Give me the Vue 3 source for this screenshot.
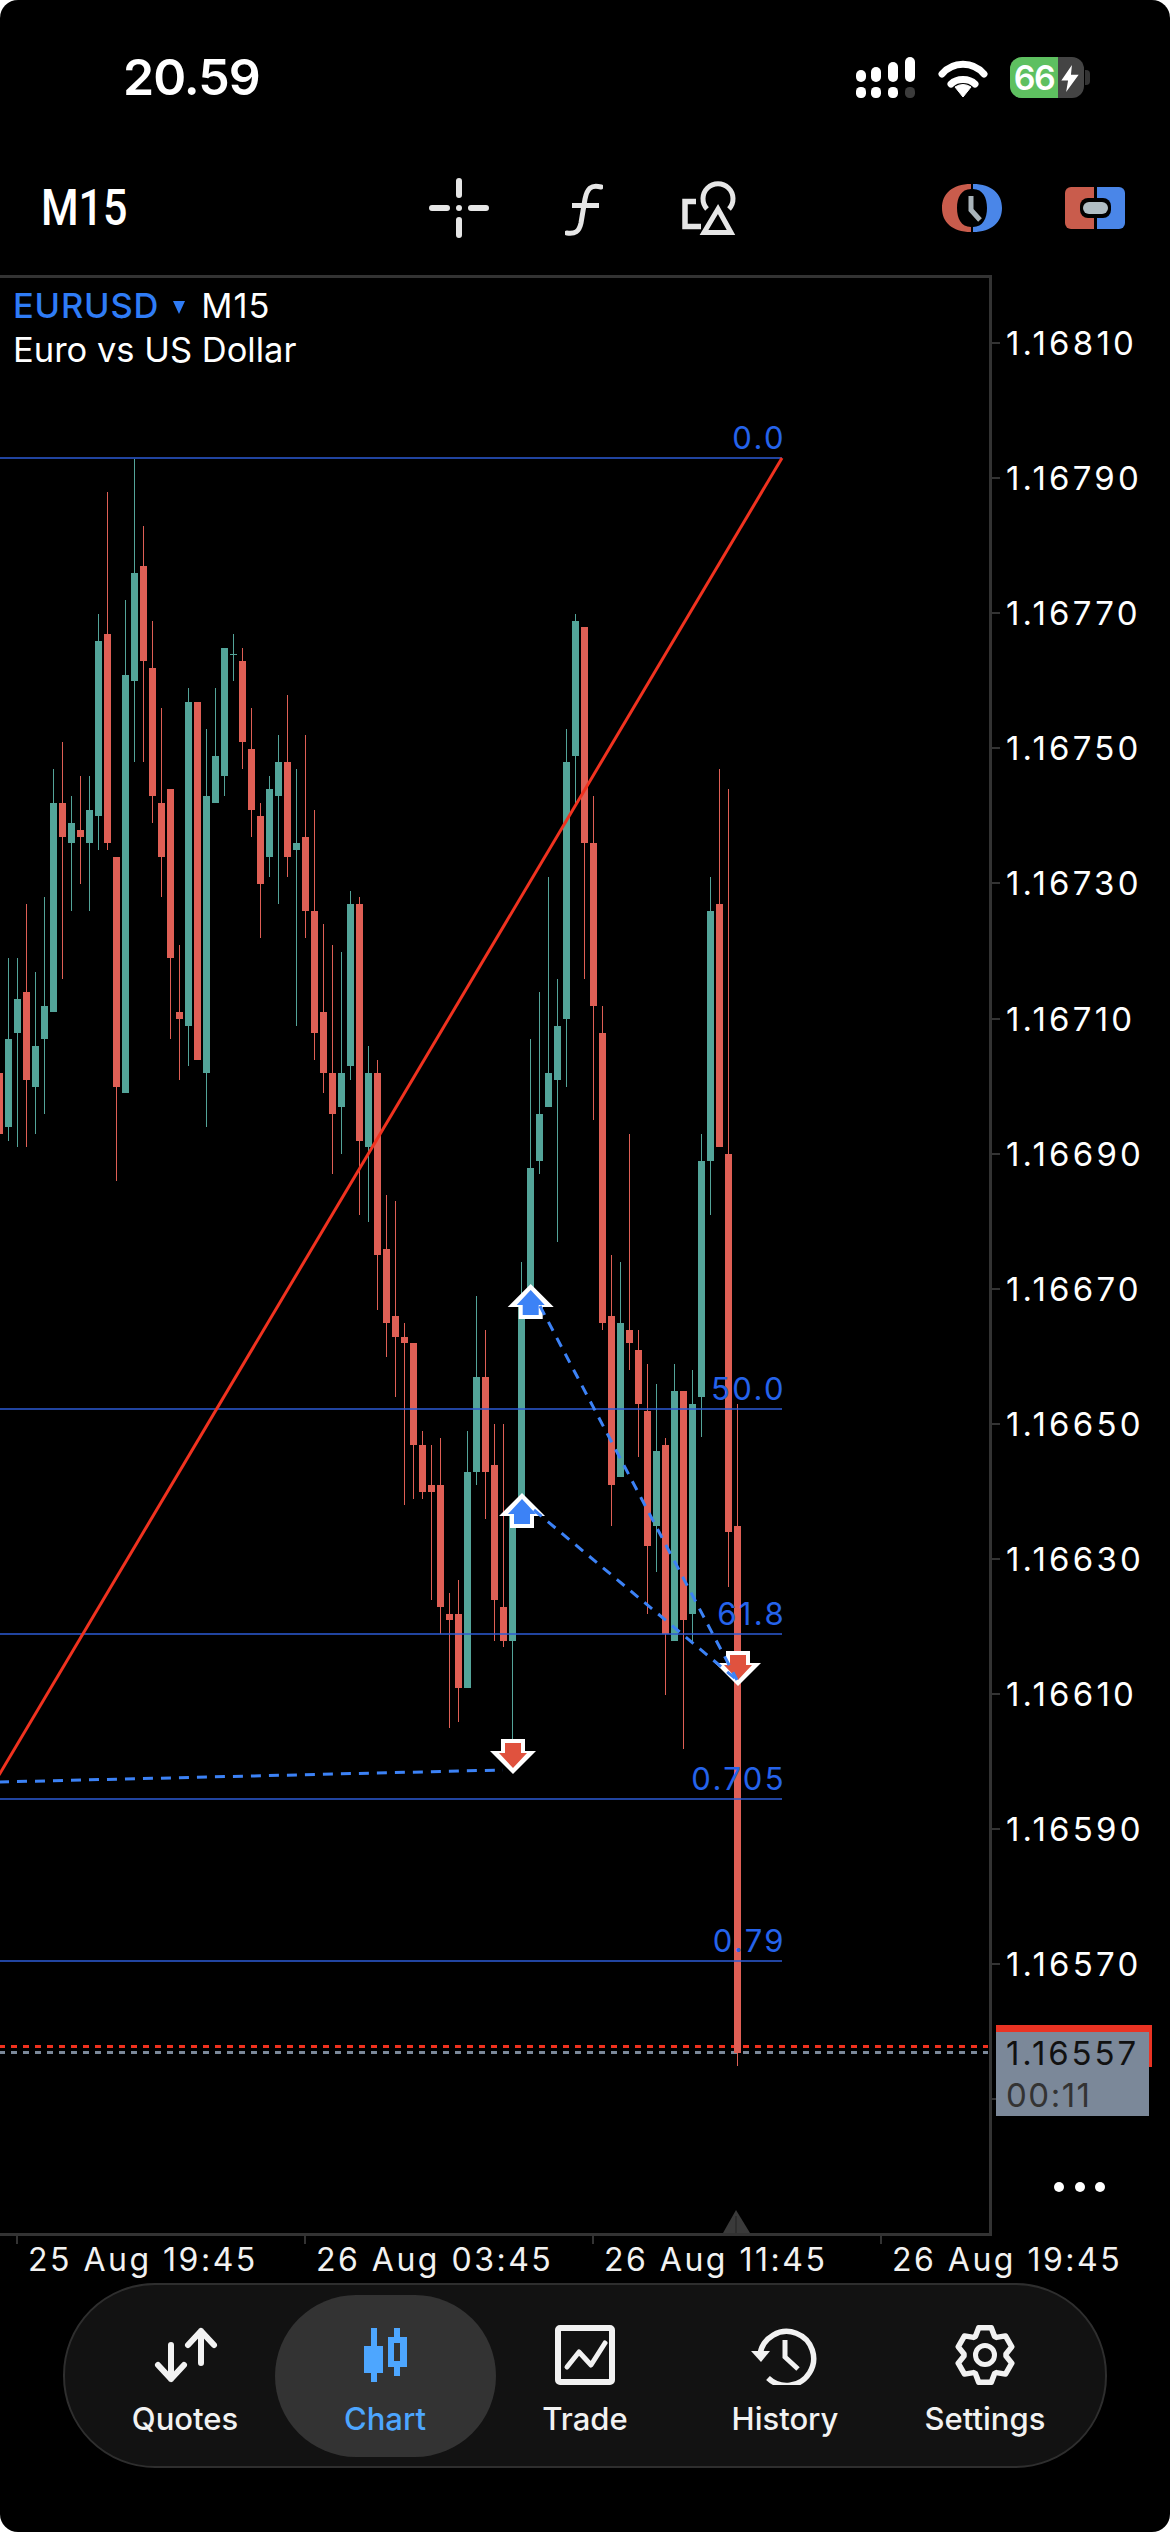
<script setup>
const raw = [
  ['r',1060,1073,1134,1145],['g',958,1039,1127,1141],['g',958,999,1033,1147],['r',904,992,1080,1147],
  ['g',972,1046,1087,1134],['g',897,1006,1039,1114],['g',769,803,1012,1012],['r',742,803,837,979],
  ['g',796,823,843,911],['r',776,830,837,884],['g',776,810,843,911],['g',614,641,816,850],
  ['r',492,634,843,850],['r',857,857,1087,1181],['g',600,675,1093,1093],['g',459,573,681,762],
  ['r',526,566,661,762],['r',621,668,796,823],['r',708,803,857,897],['r',789,789,958,1039],
  ['r',945,1012,1019,1080],['g',688,702,1026,1066],['r',702,702,1060,1060],['g',729,796,1073,1127],
  ['g',688,756,803,803],['g',648,648,776,796],['g',634,654,655,681],['r',648,661,742,769],
  ['r',708,749,810,837],['r',803,816,884,938],['g',776,789,857,877],['g',735,762,796,904],
  ['r',695,762,857,877],['g',769,843,850,1026],['r',735,837,911,938],['r',810,911,1033,1060],
  ['r',924,1012,1073,1093],['r',945,1073,1114,1174],['g',952,1073,1107,1154],['g',891,904,1066,1080],
  ['r',897,904,1141,1215],['g',1046,1073,1147,1222],['r',1060,1073,1255,1310],['r',1195,1249,1323,1357],
  ['r',1201,1316,1337,1397],['r',1323,1337,1343,1505],['r',1343,1343,1445,1499],['r',1431,1445,1492,1499],
  ['r',1445,1485,1492,1600],['r',1438,1485,1607,1634],['r',1593,1614,1620,1728],['r',1580,1614,1688,1722],
  ['g',1431,1472,1688,1688],['g',1296,1377,1472,1485],['r',1330,1377,1472,1519],['r',1424,1465,1600,1641],
  ['r',1424,1607,1641,1647],['g',1510,1510,1641,1739],['g',1262,1300,1505,1505],['g',1039,1168,1295,1295],
  ['g',992,1114,1161,1174],['g',877,1073,1107,1107],['g',979,1026,1080,1242],['g',729,762,1019,1087],
  ['g',614,621,756,803],['r',627,627,843,979],['r',796,843,1006,1120],['r',1006,1033,1323,1330],
  ['r',1255,1316,1485,1526],['g',1262,1323,1477,1477],['r',1134,1330,1343,1370],['r',1330,1350,1404,1457],
  ['r',1364,1411,1546,1614],['g',1384,1451,1526,1572],['r',1438,1445,1634,1695],['g',1364,1391,1641,1641],
  ['r',1391,1391,1620,1749],['g',1370,1404,1614,1641],['g',1134,1161,1397,1437],['g',877,911,1161,1215],
  ['r',769,904,1147,1147],['r',789,1154,1532,1587],['r',1404,1526,2053,2066]
]
const candles = raw.map((c, i) => ({
  id: i,
  color: c[0] === 'g' ? '#53a499' : '#df5f55',
  x: 9 * i,
  hi: c[1],
  top: c[2],
  h: c[3] - c[2],
  lo: c[4]
}))

const fibs = [
  { label: '0.0', y: 458 },
  { label: '50.0', y: 1409 },
  { label: '61.8', y: 1634 },
  { label: '0.705', y: 1799 },
  { label: '0.79', y: 1961 }
]

const prices = ['1.16810','1.16790','1.16770','1.16750','1.16730','1.16710','1.16690','1.16670','1.16650','1.16630','1.16610','1.16590','1.16570','']
const times = ['25 Aug 19:45','26 Aug 03:45','26 Aug 11:45','26 Aug 19:45']

const signalTop = [{ x: 0, y: 13, h: 12 }, { x: 15, y: 10, h: 15 }, { x: 32, y: 5, h: 20 }, { x: 49, y: 0, h: 25 }]

function gearPath(cx, cy, ro, ri) {
  const pts = []
  for (let k = 0; k < 6; k++) {
    const a = k * 60 - 90
    for (const [d, r] of [[-27, ri], [-13, ro], [13, ro], [27, ri]]) {
      const t = ((a + d) * Math.PI) / 180
      pts.push(`${(cx + r * Math.cos(t)).toFixed(1)} ${(cy + r * Math.sin(t)).toFixed(1)}`)
    }
  }
  return 'M' + pts.join('L') + 'Z'
}
const gear = gearPath(982, 2355, 28, 21)
</script>

<template>
  <div class="page">
    <header class="status">
      <span class="time">20.59</span>
      <div class="status-icons">
        <svg class="signal" viewBox="0 0 60 41" width="60" height="41">
          <rect v-for="s in signalTop" :key="s.x" :x="s.x" :y="s.y" width="10" :height="s.h" rx="5" fill="#fff" />
          <rect x="0" y="30" width="10" height="11" rx="4.5" fill="#fff" />
          <rect x="15" y="30" width="10" height="11" rx="4.5" fill="#fff" />
          <rect x="32" y="30" width="10" height="11" rx="4.5" fill="#fff" />
          <rect x="49" y="30" width="10" height="11" rx="4.5" fill="#3c3c3c" />
        </svg>
        <svg class="wifi" viewBox="937 57 50 41" width="50" height="41">
          <path d="M941 74 C952 61 972 61 983 74" fill="none" stroke="#fff" stroke-width="7" stroke-linecap="round" />
          <path d="M950 84 C956 78 968 78 974 84" fill="none" stroke="#fff" stroke-width="7" stroke-linecap="round" />
          <path d="M962 97 L954 87 Q962 82 970 87 Z" fill="#fff" stroke="#fff" stroke-linejoin="round" />
        </svg>
        <div class="battery-wrap">
          <div class="battery">
            <div class="battery-fill">66</div>
            <svg class="bolt" viewBox="0 0 20 28" width="20" height="27">
              <path d="M12 0 L1 16 H8 L6 28 L19 10 H11 Z" fill="#fff" />
            </svg>
          </div>
          <div class="nub"></div>
        </div>
      </div>
    </header>

    <div class="toolbar">
      <div class="tf"><span class="tf-text">M15</span></div>
      <svg class="tool" viewBox="429 177 60 60" width="60" height="60">
        <g stroke="#e6e6e6" stroke-width="6" stroke-linecap="round" fill="none">
          <path d="M432 207 H447 M471 207 H486 M459 180 V194 M459 219 V234" />
        </g>
        <circle cx="459" cy="207" r="3" fill="#e6e6e6" />
      </svg>
      <svg class="tool tool-f" viewBox="565 177 38 60" width="38" height="60">
        <path d="M601 186 C591 183 587 188 585 198 L581 222 C579 231 575 233 567 232" fill="none" stroke="#e6e6e6" stroke-width="5" stroke-linecap="round" />
        <path d="M572 204.5 H599" stroke="#e6e6e6" stroke-width="5" />
      </svg>
      <svg class="tool tool-s" viewBox="682 177 54 60" width="54" height="60">
        <path d="M707 208 A15 15 0 1 1 729 208" fill="none" stroke="#e6e6e6" stroke-width="5" />
        <path d="M718 208 L731 231.5 H704 Z" fill="none" stroke="#e6e6e6" stroke-width="5" />
        <path d="M696 200.5 H685 V225.5 H701" fill="none" stroke="#e6e6e6" stroke-width="5.5" />
      </svg>
      <svg class="tool tool-c" viewBox="942 177 60 60" width="60" height="60">
        <path d="M971 183 C952 183 942 193 942 207 C942 221 952 231 971 231 V226 C961 226 957 217 957 207 C957 197 961 188 971 188 Z" fill="#c95c4c" />
        <path d="M973 183 C992 183 1002 193 1002 207 C1002 221 992 231 973 231 V226 C983 226 987 217 987 207 C987 197 983 188 973 188 Z" fill="#4a86e8" />
        <path d="M971 195 V209 L980 219" fill="none" stroke="#a9b4ba" stroke-width="5" />
      </svg>
      <svg class="tool tool-t" viewBox="1065 177 60 60" width="60" height="60">
        <path d="M1094 186 H1071 A6 6 0 0 0 1065 192 V222 A6 6 0 0 0 1071 228 H1094 Z" fill="#c95c4c" />
        <path d="M1097 186 H1119 A6 6 0 0 1 1125 192 V222 A6 6 0 0 1 1119 228 H1097 Z" fill="#4a86e8" />
        <rect x="1080" y="197" width="31" height="20" rx="8" fill="#000" />
        <rect x="1083" y="201" width="25" height="12" rx="6" fill="#b0bdc3" />
      </svg>
    </div>

    <section class="chart-row">
      <div class="chart">
        <svg class="plot" viewBox="1 278 988 1955" width="988" height="1955">
          <g stroke-width="3" stroke-dasharray="6 6">
            <path d="M0 2046.5 H989" stroke="#f0321f" />
            <path d="M0 2052.5 H989" stroke="#7b8899" />
          </g>
          <g v-for="c in candles" :key="c.id" :fill="c.color">
            <rect :x="c.x" :y="c.hi" width="1" :height="c.lo - c.hi" />
            <rect :x="c.x - 3" :y="c.top" width="7" :height="c.h" />
          </g>
          <line v-for="f in fibs" :key="f.label" x1="0" x2="783" :y1="f.y" :y2="f.y" stroke="#2c5bd6" stroke-width="1.3" />
          <line x1="0" y1="1775" x2="783" y2="458" stroke="#f0321f" stroke-width="3" />

          <g transform="translate(531.7 1284)">
            <polygon points="0,0 23,23 12,23 12,35 -12,35 -12,23 -23,23" fill="#fff" />
            <polygon points="0,6 14,21 8,21 8,31 -8,31 -8,21 -14,21" fill="#3c82f6" />
          </g>
          <g transform="translate(523 1493)">
            <polygon points="0,0 23,23 12,23 12,35 -12,35 -12,23 -23,23" fill="#fff" />
            <polygon points="0,6 14,21 8,21 8,31 -8,31 -8,21 -14,21" fill="#3c82f6" />
          </g>
          <g transform="translate(514 1774)">
            <polygon points="0,0 23,-23 12,-23 12,-35 -12,-35 -12,-23 -23,-23" fill="#fff" />
            <polygon points="0,-6 14,-21 8,-21 8,-31 -8,-31 -8,-21 -14,-21" fill="#e0523e" />
          </g>
          <g transform="translate(739 1686)">
            <polygon points="0,0 23,-23 12,-23 12,-35 -12,-35 -12,-23 -23,-23" fill="#fff" />
            <polygon points="0,-6 14,-21 8,-21 8,-31 -8,-31 -8,-21 -14,-21" fill="#e0523e" />
          </g>

          <g fill="none" stroke="#3c82f6" stroke-width="3" stroke-dasharray="10 8">
            <path d="M541 1306 L738 1680" />
            <path d="M535 1510 L738 1680" />
            <path d="M0 1782 L504 1770" />
          </g>

          <text v-for="f in fibs" :key="'t' + f.label" class="fib-label" x="787" :y="f.y - 9" text-anchor="end">{{ f.label }}</text>

          <path d="M737 2210 L751 2233 H724 Z" fill="#3a3a3a" />
          <path d="M737 2216 V2233" stroke="#222" stroke-width="1" />
        </svg>
        <div class="symbol">
          <div class="symbol-line">
            <span class="sym">EURUSD</span>
            <span class="sym-tri"></span>
            <span class="sym-tf">M15</span>
          </div>
          <div class="symbol-name">Euro vs US Dollar</div>
        </div>
      </div>

      <div class="price-axis">
        <div v-for="(p, i) in prices" :key="i" class="price-row">
          <span class="tick"></span>
          <span class="price">{{ p }}</span>
        </div>
        <div class="price-box">
          <div class="box-price">1.16557</div>
          <div class="box-time">00:11</div>
        </div>
        <div class="dots"><i></i><i></i><i></i></div>
      </div>
    </section>

    <div class="time-axis">
      <div v-for="t in times" :key="t" class="time-cell">
        <span class="time-tick"></span>
        <span class="time-label">{{ t }}</span>
      </div>
    </div>

    <nav class="tabs">
      <div class="tab">
        <svg viewBox="150 2325 70 60" width="70" height="60">
          <g fill="none" stroke="#f2f2f2" stroke-width="6" stroke-linecap="round" stroke-linejoin="round">
            <path d="M201 2363 V2331 M188 2345 L201 2331 L214 2345" />
            <path d="M171 2345 V2379 M158 2365 L171 2379 L184 2365" />
          </g>
        </svg>
        <span class="tab-label">Quotes</span>
      </div>
      <div class="tab active">
        <svg viewBox="350 2325 70 60" width="70" height="60">
          <g fill="#4da6ff">
            <rect x="371" y="2328" width="6" height="54" />
            <rect x="364" y="2346" width="19" height="27" />
            <path fill-rule="evenodd" d="M394 2328 H400 V2337 H407 V2367 H400 V2376 H394 V2367 H388 V2337 H394 Z M394 2343 V2361 H400 V2343 Z" />
          </g>
        </svg>
        <span class="tab-label">Chart</span>
      </div>
      <div class="tab">
        <svg viewBox="550 2325 70 60" width="70" height="60">
          <rect x="558" y="2328" width="54" height="54" rx="2" fill="none" stroke="#f2f2f2" stroke-width="6" />
          <path d="M567 2367 L579 2352 L591 2365 L605 2343" fill="none" stroke="#f2f2f2" stroke-width="5" stroke-linecap="round" stroke-linejoin="round" />
        </svg>
        <span class="tab-label">Trade</span>
      </div>
      <div class="tab">
        <svg viewBox="749 2325 70 60" width="70" height="60">
          <path d="M759 2354 A27 27 0 1 1 767 2378" fill="none" stroke="#f2f2f2" stroke-width="5.5" />
          <path d="M750 2351 H769 L760 2362 Z" fill="#f2f2f2" />
          <path d="M784 2340 V2357 L797 2369" fill="none" stroke="#f2f2f2" stroke-width="5" />
        </svg>
        <span class="tab-label">History</span>
      </div>
      <div class="tab">
        <svg viewBox="947 2325 70 60" width="70" height="60">
          <path :d="gear" fill="none" stroke="#f2f2f2" stroke-width="5.5" stroke-linejoin="round" />
          <circle cx="982" cy="2355" r="9.5" fill="none" stroke="#f2f2f2" stroke-width="5" />
        </svg>
        <span class="tab-label">Settings</span>
      </div>
    </nav>
  </div>
</template>

<style>
html, body { margin: 0; background: #fff; }
</style>

<style scoped>
.page {
  position: relative;
  width: 1170px;
  height: 2532px;
  background: #000;
  border-radius: 18px;
  overflow: hidden;
  color: #fff;
  font-family: Inter, "Noto Sans", sans-serif;
}
.status {
  box-sizing: border-box;
  height: 140px;
  padding: 57px 80px 0 123px;
  display: flex;
  justify-content: space-between;
  align-items: flex-start;
}
.time {
  font-size: 50px;
  line-height: 41px;
  font-weight: 600;
  letter-spacing: -1px;
}
.status-icons { display: flex; align-items: flex-start; gap: 22px; }
.signal, .wifi { display: block; }
.battery-wrap { display: flex; align-items: center; height: 41px; }
.battery {
  width: 74px;
  height: 41px;
  border-radius: 12px;
  background: #444;
  overflow: hidden;
  position: relative;
  display: flex;
}
.battery-fill {
  width: 48px;
  background: #5ec060;
  font-size: 34px;
  font-weight: 600;
  line-height: 41px;
  text-align: center;
  letter-spacing: -1.5px;
}
.bolt { position: absolute; left: 50px; top: 8px; }
.nub { width: 5px; height: 15px; margin-left: 1px; background: #333; border-radius: 0 4px 4px 0; }

.toolbar { height: 135px; display: flex; align-items: center; padding-left: 41px; }
.tf { width: 388px; }
.tf-text {
  display: inline-block;
  font-family: Roboto, sans-serif;
  font-size: 50px;
  font-weight: 500;
  line-height: 50px;
  transform: scaleX(0.86);
  transform-origin: left center;
}
.tool { display: block; }
.tool-f { margin-left: 76px; }
.tool-s { margin-left: 79px; }
.tool-c { margin-left: 206px; }
.tool-t { margin-left: 63px; }

.chart-row { display: flex; height: 1961px; }
.chart {
  position: relative;
  box-sizing: border-box;
  width: 992px;
  height: 1961px;
  border-style: solid;
  border-color: #333;
  border-width: 3px 3px 3px 0;
}
.plot { display: block; }
.fib-label {
  font-family: Inter, sans-serif;
  font-size: 31px;
  letter-spacing: 2.4px;
  fill: #2563eb;
}
.symbol { position: absolute; left: 13px; top: 6px; font-size: 34.5px; line-height: 44px; }
.symbol-line { display: flex; align-items: center; }
.sym { color: #2f7cf6; font-weight: 500; letter-spacing: 0.8px; }
.sym-tf { letter-spacing: 1px; }
.sym-tri {
  width: 0;
  height: 0;
  margin: 2px 16px 0 14px;
  border-left: 6.5px solid transparent;
  border-right: 6.5px solid transparent;
  border-top: 13px solid #2f7cf6;
}
.price-axis { position: relative; flex: 1; padding-top: 0.5px; }
.price-row { display: flex; align-items: center; height: 135.1px; position: relative; }
.tick { width: 8px; height: 2px; background: #333; flex: none; }
.price { margin-left: 6px; font-size: 33px; letter-spacing: 3.2px; color: #fff; }
.price-box {
  position: absolute;
  left: 4px;
  top: 1750px;
  width: 153px;
  height: 84px;
  background: #7b8899;
  box-sizing: content-box;
  padding-top: 0;
  border-top: 7px solid #ea3323;
}
.price-box::after {
  content: "";
  position: absolute;
  left: 153px;
  top: -7px;
  width: 3px;
  height: 42px;
  background: #ea3323;
}
.box-price { color: #111; font-size: 33px; letter-spacing: 2.9px; line-height: 42px; padding-left: 10px; }
.box-time { color: #333; font-size: 33px; letter-spacing: 1.5px; line-height: 42px; padding-left: 10px; }
.dots { position: absolute; left: 62px; top: 1907px; display: flex; gap: 10.5px; }
.dots i { display: block; width: 10px; height: 10px; border-radius: 50%; background: #fff; }

.time-axis { height: 47px; display: flex; padding-left: 16px; }
.time-cell { width: 288px; position: relative; }
.time-tick { position: absolute; left: 0; top: 0; width: 2px; height: 8px; background: #333; }
.time-label {
  position: absolute;
  left: 12px;
  top: 6px;
  font-size: 32px;
  line-height: 36px;
  letter-spacing: 2.5px;
  white-space: nowrap;
  color: #f2f2f2;
}

.tabs {
  box-sizing: border-box;
  margin-left: 63px;
  width: 1044px;
  height: 185px;
  padding: 0 20px;
  display: flex;
  background: #121212;
  border: 2px solid #2e2e2e;
  border-radius: 92px;
}
.tab {
  position: relative;
  width: 200px;
  flex: none;
  box-sizing: border-box;
  padding-top: 40px;
  display: flex;
  flex-direction: column;
  align-items: center;
}
.tab svg, .tab-label { position: relative; }
.tab svg { display: block; }
.tab-label { margin-top: 16px; font-size: 31px; line-height: 36px; font-weight: 500; color: #f2f2f2; }
.tab.active::before {
  content: "";
  position: absolute;
  left: -10px;
  right: -11px;
  top: 10px;
  height: 162px;
  border-radius: 81px;
  background: #333;
}
.tab.active .tab-label { color: #4da6ff; }
</style>
